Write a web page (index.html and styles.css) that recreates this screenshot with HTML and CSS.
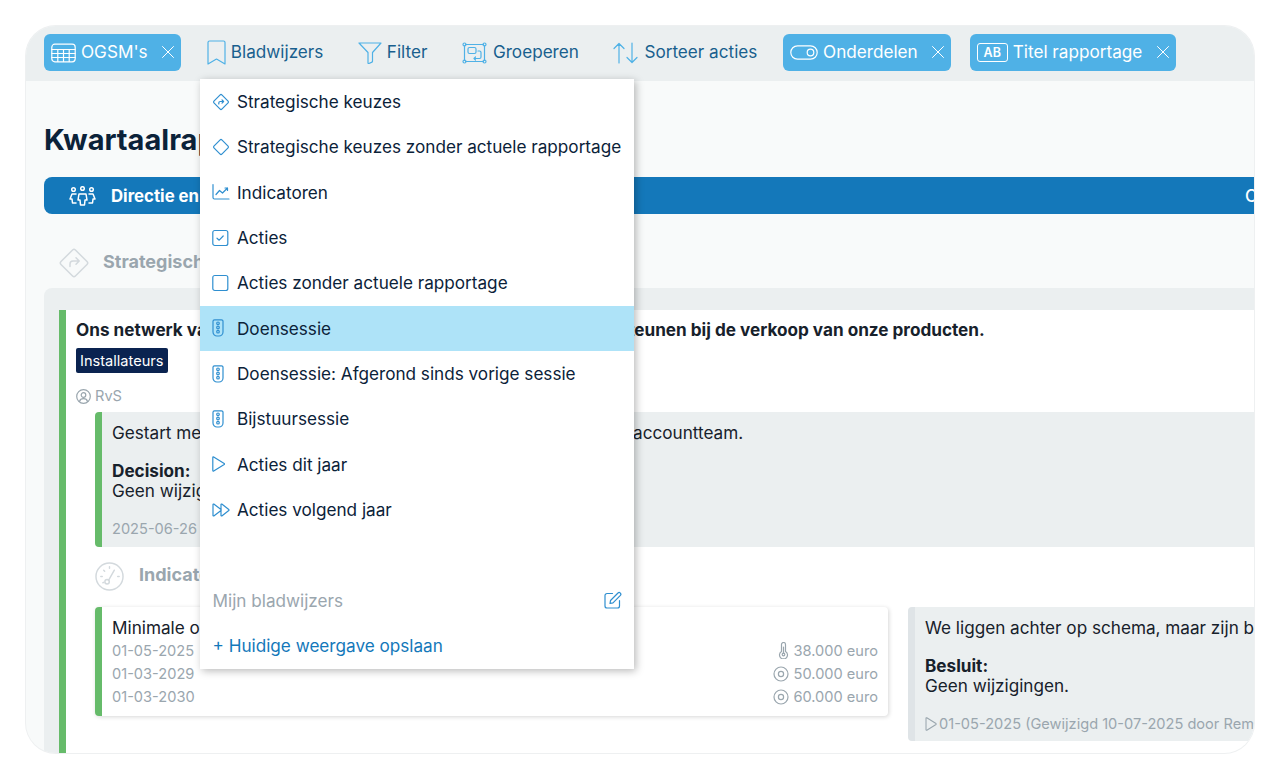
FILE: index.html
```html
<!DOCTYPE html>
<html lang="nl">
<head>
    <meta charset="UTF-8">
    <title>Kwartaalrapportage</title>
    <link rel="stylesheet" href="styles.css">
</head>
<body>
    <svg class="defs" width="0" height="0">
        <symbol id="i-close" viewBox="0 0 14 14"><path d="M1.5 1.5l11 11M12.5 1.5l-11 11"/></symbol>
        <symbol id="i-traffic" viewBox="0 0 12 18"><path d="M2.500 .8h7a1.500 1.500 0 0 1 1.500 1.500v10.700a4 4 0 0 1-4 4H5a4 4 0 0 1-4-4V2.300A1.500 1.500 0 0 1 2.500 .8z"/><circle cx="6" cy="4.300" r="1.300"/><circle cx="6" cy="8.500" r="1.300"/><circle cx="6" cy="12.700" r="1.300"/></symbol>
        <symbol id="i-play" viewBox="0 0 13 16"><path d="M.8 1.400a.6.6 0 0 1 .9-.5l10.500 6.600a.6.6 0 0 1 0 1L1.700 15.100a.6.6 0 0 1-.9-.5z"/></symbol>
        <symbol id="i-target" viewBox="0 0 16 16"><circle cx="8" cy="8" r="7"/><circle cx="8" cy="8" r="2.600"/></symbol>
    </svg>

    <div class="window">
        <div class="toolbar">
            <div class="chip">
                <svg class="icon chip-icon" width="25" height="20" viewBox="0 0 25 20"><rect x=".8" y="1.200" width="23.400" height="17.600" rx="3"/><path d="M.8 6.500h23.400M.8 10.500h23.400M.8 14.500h23.400M6.800 6.500v12M12.500 6.500v12M18.200 6.500v12"/></svg>
                <span>OGSM's</span>
                <svg class="icon chip-close" width="14" height="14"><use href="#i-close"/></svg>
            </div>
            <div class="tool">
                <svg class="icon tool-icon" width="19" height="25" viewBox="0 0 19 25"><path d="M2.500 1h14a1.500 1.500 0 0 1 1.500 1.500V24l-8.500-5L1 24V2.500A1.500 1.500 0 0 1 2.500 1z"/></svg>
                <span>Bladwijzers</span>
            </div>
            <div class="tool">
                <svg class="icon tool-icon" width="24" height="22" viewBox="0 0 24 22"><path d="M1 1h22l-8.500 9.500v8.700a1 1 0 0 1-.6.900l-3 1.400a.6.6 0 0 1-.9-.6V10.500z"/></svg>
                <span>Filter</span>
            </div>
            <div class="tool">
                <svg class="icon tool-icon wide" width="25" height="22" viewBox="0 0 25 22"><path d="M3.500 2.500h18M3.500 19.500h18M2.500 3.500v15M22.500 3.500v15"/><circle cx="2.500" cy="2.500" r="1.500"/><circle cx="22.500" cy="2.500" r="1.500"/><circle cx="2.500" cy="19.500" r="1.500"/><circle cx="22.500" cy="19.500" r="1.500"/><rect x="6" y="5.500" width="8" height="6" rx="1.500"/><path d="M16 9h1.500a1.500 1.500 0 0 1 1.500 1.500V15a1.500 1.500 0 0 1-1.500 1.500H12l1.500-1.500M12 16.500l1.500 1.500"/></svg>
                <span>Groeperen</span>
            </div>
            <div class="tool">
                <svg class="icon tool-icon wide" width="25" height="22" viewBox="0 0 25 22"><path d="M6 21V1.500M1 6.500l5-5 5 5M19 1v19.500M14 15.500l5 5 5-5"/></svg>
                <span>Sorteer acties</span>
            </div>
            <div class="chip">
                <svg class="icon chip-icon" width="28" height="15" viewBox="0 0 28 15"><rect x=".8" y=".8" width="26.400" height="13.400" rx="6.700"/><circle cx="20.500" cy="7.500" r="3.300"/></svg>
                <span>Onderdelen</span>
                <svg class="icon chip-close" width="14" height="14"><use href="#i-close"/></svg>
            </div>
            <div class="chip">
                <span class="ab">AB</span>
                <span>Titel rapportage</span>
                <svg class="icon chip-close" width="14" height="14"><use href="#i-close"/></svg>
            </div>
        </div>

        <div class="content">
            <h1>Kwartaalrapportage</h1>

            <div class="bar">
                <svg class="icon bar-icon" width="27" height="20" viewBox="0 0 27 20"><circle cx="13.500" cy="2.500" r="1.800"/><circle cx="4.500" cy="3.500" r="1.800"/><circle cx="22.500" cy="3.500" r="1.800"/><path d="M10 8h7l1 6h-2l-.5 5h-4L11 14H9zM7 8H3L1 13h2l.5 4H7M20 8h4l2 5h-2l-.5 4H20"/></svg>
                <span>Directie en managementteam</span>
                <span class="bar-end">Controller</span>
            </div>

            <div class="section-head">
                <svg class="icon section-icon" width="30" height="30" viewBox="0 0 30 30"><rect x="4.800" y="4.800" width="20.400" height="20.400" rx="2" transform="rotate(45 15 15)"/><path d="M11 18.500v-2.500a3 3 0 0 1 3-3h6M17 9.800l3.200 3.200-3.200 3.200"/></svg>
                <span>Strategische keuzes</span>
            </div>

            <div class="panel">
                <div class="card">
                    <div class="card-title">Ons netwerk van installateurs is in staat om ons volledig te ondersteunen bij de verkoop van onze producten.</div>
                    <span class="badge">Installateurs</span>
                    <div class="owner">
                        <svg class="icon" width="15" height="15" viewBox="0 0 15 15"><circle cx="7.500" cy="7.500" r="6.800"/><circle cx="7.500" cy="6" r="2.300"/><path d="M3.500 12.500c.5-2 2-2.800 4-2.800s3.500.8 4 2.800"/></svg>
                        <span>RvS</span>
                    </div>

                    <div class="update">
                        <div>Gestart met het opzetten van een partnerschap, samen met ons accountteam.</div>
                        <div class="decision"><b>Decision:</b><br>Geen wijzigingen.</div>
                        <div class="stamp">2025-06-26</div>
                    </div>

                    <div class="section-head sub">
                        <svg class="icon section-icon" width="30" height="30" viewBox="0 0 30 30"><circle cx="15" cy="15" r="14"/><circle cx="12.500" cy="20.500" r="2.300"/><path d="M14 19l6-10.500M6 15h1.500M9 8.500l1 1M15 5v1.500M23.500 15H25M8 21.500l1-.5"/></svg>
                        <span>Indicatoren</span>
                    </div>

                    <div class="indicator-row">
                        <div class="indicator">
                            <div class="indicator-left">
                                <div class="indicator-name">Minimale omzet via installateurs</div>
                                <div>01-05-2025</div>
                                <div>01-03-2029</div>
                                <div>01-03-2030</div>
                            </div>
                            <div class="indicator-right">
                                <div>
                                    <svg class="icon" width="11" height="17" viewBox="0 0 11 17"><path d="M3.500 9.500V2.500a2 2 0 0 1 4 0v7a4 4 0 1 1-4 0z"/><circle cx="5.500" cy="12.500" r="1.300"/><path d="M5.500 11V5"/></svg>
                                    38.000 euro
                                </div>
                                <div><svg class="icon" width="16" height="16"><use href="#i-target"/></svg> 50.000 euro</div>
                                <div><svg class="icon" width="16" height="16"><use href="#i-target"/></svg> 60.000 euro</div>
                            </div>
                        </div>
                        <div class="note">
                            <div>We liggen achter op schema, maar zijn bezig met een inhaalslag richting het einde van het jaar.</div>
                            <div class="decision"><b>Besluit:</b><br>Geen wijzigingen.</div>
                            <div class="stamp">
                                <svg class="icon" width="12" height="14"><use href="#i-play"/></svg>
                                01-05-2025 (Gewijzigd 10-07-2025 door Remco)
                            </div>
                        </div>
                    </div>
                </div>
            </div>
        </div>

        <div class="menu">
            <div class="menu-item">
                <svg class="icon" width="18" height="18" viewBox="0 0 18 18"><rect x="3.400" y="3.400" width="11.200" height="11.200" rx="1.200" transform="rotate(45 9 9)"/><path d="M6.800 11v-1a1.500 1.500 0 0 1 1.500-1.500h3.200M10 6.900l1.600 1.600-1.600 1.600"/></svg>
                <span>Strategische keuzes</span>
            </div>
            <div class="menu-item">
                <svg class="icon" width="18" height="18" viewBox="0 0 18 18"><rect x="3.400" y="3.400" width="11.200" height="11.200" rx="1.200" transform="rotate(45 9 9)"/></svg>
                <span>Strategische keuzes zonder actuele rapportage</span>
            </div>
            <div class="menu-item">
                <svg class="icon" width="18" height="18" viewBox="0 0 18 18"><path d="M1 1.500v13a1.500 1.500 0 0 0 1.500 1.500H17M4 11.500l3.500-4 3 2.500 5-5M13 5h2.500v2.500"/></svg>
                <span>Indicatoren</span>
            </div>
            <div class="menu-item">
                <svg class="icon" width="18" height="18" viewBox="0 0 18 18"><rect x=".8" y="1.500" width="15" height="15" rx="2"/><path d="M5 9.200l2.200 2 4-4.200"/></svg>
                <span>Acties</span>
            </div>
            <div class="menu-item">
                <svg class="icon" width="18" height="18" viewBox="0 0 18 18"><rect x=".8" y="1.500" width="15" height="15" rx="2"/></svg>
                <span>Acties zonder actuele rapportage</span>
            </div>
            <div class="menu-item active">
                <svg class="icon traffic" width="12" height="18"><use href="#i-traffic"/></svg>
                <span>Doensessie</span>
            </div>
            <div class="menu-item">
                <svg class="icon traffic" width="12" height="18"><use href="#i-traffic"/></svg>
                <span>Doensessie: Afgerond sinds vorige sessie</span>
            </div>
            <div class="menu-item">
                <svg class="icon traffic" width="12" height="18"><use href="#i-traffic"/></svg>
                <span>Bijstuursessie</span>
            </div>
            <div class="menu-item">
                <svg class="icon play" width="13" height="16"><use href="#i-play"/></svg>
                <span>Acties dit jaar</span>
            </div>
            <div class="menu-item">
                <svg class="icon" width="18" height="18" viewBox="0 0 18 18"><path d="M1 3.500a.5.500 0 0 1 .8-.4L9 8.500a.6.600 0 0 1 0 1l-7.200 5.400a.5.500 0 0 1-.8-.4zM9 3.500a.5.500 0 0 1 .8-.4l7 5.400a.6.600 0 0 1 0 1l-7 5.400a.5.500 0 0 1-.8-.4z"/></svg>
                <span>Acties volgend jaar</span>
            </div>

            <div class="menu-footer">
                <div class="menu-row">
                    <span class="menu-label">Mijn bladwijzers</span>
                    <svg class="icon" width="18" height="18" viewBox="0 0 18 18"><path d="M8.500 2.500H3a2 2 0 0 0-2 2V15a2 2 0 0 0 2 2h10.500a2 2 0 0 0 2-2V9.500"/><path d="M6.500 9.500L14 2a1.700 1.700 0 0 1 2.400 2.400L9 11.800l-3 .7z"/></svg>
                </div>
                <div class="menu-row save">+ Huidige weergave opslaan</div>
            </div>
        </div>
    </div>
</body>
</html>
```

FILE: styles.css
```css
body {
    margin: 0;
    background-color: #fff;
    font-family: "Inter", "Liberation Sans", sans-serif;
    font-size: 17.150px;
    color: #17212b;
}
.defs {
    position: absolute;
}
.icon {
    flex: none;
    fill: none;
    stroke: currentColor;
    stroke-width: 1.200;
    stroke-linecap: round;
    stroke-linejoin: round;
}
.window {
    position: relative;
    box-sizing: border-box;
    width: 1228px;
    height: 727px;
    margin: 26px;
    overflow: hidden;
    background-color: #f8fafa;
    border-radius: 30px;
    box-shadow: 0 0 0 1px #eef0f1;
    white-space: nowrap;
}

/* toolbar */
.toolbar {
    display: flex;
    align-items: center;
    height: 55px;
    padding-left: 9.500px;
    padding-bottom: 2px;
    box-sizing: border-box;
    background-color: #ebeff0;
}
.chip {
    display: flex;
    align-items: center;
    height: 37px;
    margin: 0 8.500px;
    padding: 0 6px 0 7px;
    background-color: #4fb1e6;
    border-radius: 6px;
    color: #fff;
}
.chip + .chip {
    margin-left: 10px;
}
.chip span,
.tool span {
    padding-bottom: 2px;
}
.chip-icon {
    margin-right: 5px;
}
.chip-close {
    margin: 0 0 2px 13.500px;
    stroke-width: 1;
}
.chip .ab {
    box-sizing: border-box;
    width: 31px;
    height: 19px;
    line-height: 17px;
    margin-right: 5px;
    padding: 0;
    border: 1px solid #fff;
    border-radius: 3px;
    font-size: 12.500px;
    font-weight: 600;
    text-align: center;
}
.tool {
    display: flex;
    align-items: center;
    gap: 5px;
    padding: 0 17.250px;
    color: #195f8e;
}
.tool-icon {
    color: #4fb1e6;
}
.tool-icon.wide {
    margin-right: 1px;
}

/* content */
.content {
    padding-left: 18px;
}
h1 {
    margin: 42px 0 20px;
    font-size: 29px;
    line-height: 34px;
    font-weight: 700;
    color: #0b2239;
}
.bar {
    display: flex;
    align-items: center;
    height: 37px;
    padding-left: 25px;
    background-color: #1478ba;
    border-radius: 8px 0 0 8px;
    color: #fff;
    font-size: 16.800px;
    font-weight: 700;
}
.bar-icon {
    margin-right: 15px;
    stroke-width: 1.500;
}
.bar-end {
    width: 9px;
    margin-left: auto;
    font-weight: 500;
}
.section-head {
    display: flex;
    align-items: center;
    gap: 14px;
    height: 30px;
    margin: 34px 0 10px 15px;
    font-size: 18px;
    font-weight: 700;
    color: #9aa6ae;
}
.section-head span {
    padding-bottom: 3px;
}
.section-icon {
    color: #d3d9dd;
    stroke-width: 1.500;
}
.section-head.sub {
    gap: 15px;
    margin: 14px 0 16px 19px;
}
.section-head.sub .section-icon {
    width: 29px;
    height: 29px;
}
.panel {
    height: 465px;
    padding: 22px 0 0 15px;
    background-color: #ebeff0;
    border-radius: 8px 0 0 0;
}
.card {
    height: 100%;
    padding: 9px 0 0 10px;
    background-color: #fff;
    border-left: 7px solid #66bb6a;
}
.card-title {
    line-height: 22px;
    font-weight: 700;
}
.badge {
    display: inline-block;
    margin-top: 7px;
    padding: 0 4px;
    height: 25px;
    line-height: 26px;
    background-color: #0a2350;
    border-radius: 2px;
    color: #fff;
    font-size: 14.600px;
}
.owner {
    display: flex;
    align-items: center;
    gap: 4px;
    height: 20px;
    margin-top: 13px;
    font-size: 14.600px;
    color: #9aa6ae;
}
.update {
    margin: 6px 0 0 19px;
    height: 135px;
    box-sizing: border-box;
    padding: 11px 0 0 10px;
    background-color: #ebeff0;
    border-left: 7px solid #66bb6a;
    border-radius: 4px 0 0 4px;
    line-height: 20.500px;
}
.decision {
    margin-top: 17px;
}
.stamp {
    display: flex;
    align-items: center;
    gap: 2px;
    margin-top: 17px;
    font-size: 14.600px;
    color: #9aa6ae;
}
.indicator-row {
    display: flex;
    gap: 20px;
    margin-left: 19px;
    align-items: flex-start;
}
.indicator {
    display: flex;
    justify-content: space-between;
    flex: none;
    box-sizing: border-box;
    width: 793px;
    height: 109px;
    padding: 9px 10px 0 10px;
    background-color: #fff;
    border-left: 7px solid #66bb6a;
    border-radius: 4px;
    box-shadow: 1px 1px 4px rgba(0, 0, 0, 0.16);
    line-height: 23px;
    font-size: 14.600px;
    color: #9aa6ae;
}
.indicator-name {
    font-size: 17.150px;
    line-height: 24px;
    color: #17212b;
}
.indicator-right {
    padding-top: 24px;
    text-align: right;
}
.indicator-right .icon {
    vertical-align: -3px;
}
.note {
    box-sizing: border-box;
    flex: none;
    width: 400px;
    height: 134px;
    padding: 11px 0 0 10px;
    background-color: #ebeff0;
    border-left: 7px solid #dfe4e7;
    border-radius: 4px 0 0 4px;
    line-height: 20.500px;
}

/* bookmarks menu */
.menu {
    position: absolute;
    left: 174px;
    top: 53px;
    display: flex;
    flex-direction: column;
    width: 434px;
    height: 590px;
    background-color: #fff;
    box-shadow: 2px 2px 8px rgba(0, 0, 0, 0.28);
    color: #0b2239;
}
.menu-item {
    display: flex;
    align-items: center;
    gap: 7px;
    height: 45.330px;
    padding-left: 12px;
}
.menu-item .icon {
    color: #2f8fd0;
}
.menu-item .traffic {
    margin-right: 6px;
}
.menu-item .play {
    margin-right: 5px;
}
.menu-item.active {
    background-color: #aee3f8;
}
.menu-footer {
    margin-top: auto;
}
.menu-row {
    display: flex;
    align-items: center;
    justify-content: space-between;
    box-sizing: border-box;
    height: 45.330px;
    padding: 0 12px 2px 12.500px;
}
.menu-row .icon {
    color: #2f8fd0;
}
.menu-label {
    color: #9aa6ae;
}
.save {
    color: #1478ba;
}
```
